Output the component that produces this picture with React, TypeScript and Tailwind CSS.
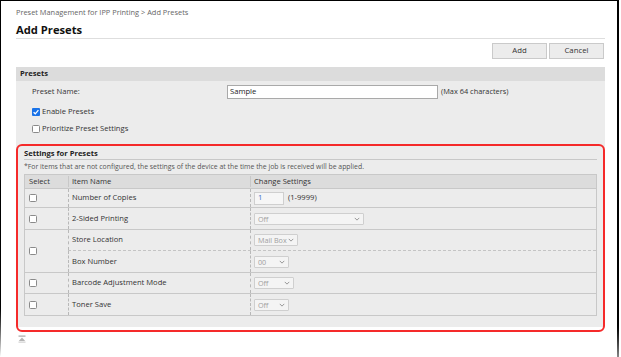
import React from "react";

function Check({ checked = false }: { checked?: boolean }) {
  if (checked) {
    return (
      <span className="flex h-[8px] w-[8px] items-center justify-center rounded-[1px] bg-[#1a73e8]">
        <svg viewBox="0 0 8 8" className="h-[8px] w-[8px]">
          <path d="M1.6 4.2 L3.3 5.8 L6.4 2.2" stroke="#fff" strokeWidth="1.3" fill="none" />
        </svg>
      </span>
    );
  }
  return <span className="block h-[8px] w-[8px] rounded-[1.5px] border border-[#8a8a8a] bg-white" />;
}

function Chevron() {
  return (
    <svg viewBox="0 0 8 5" className="h-[4px] w-[6px] shrink-0">
      <path d="M1 1 L4 4 L7 1" stroke="#8c8c8c" strokeWidth="1.2" fill="none" />
    </svg>
  );
}

function Select({ label, width, tight = false }: { label: string; width: string; tight?: boolean }) {
  return (
    <div
      className={`flex h-[12px] items-center rounded-[1px] border border-[#cfcfcf] bg-[#f4f4f4] pl-[3px] pr-[3px] text-[7.2px] text-[#a0a0a0] ${width} ${
        tight ? "gap-[1px]" : "justify-between"
      }`}
    >
      <span className="whitespace-nowrap leading-[10px]">{label}</span>
      <Chevron />
    </div>
  );
}

type Row = {
  name: string;
  h: string;
  control: React.ReactNode;
};

export default function App() {
  const rows: Row[] = [
    {
      name: "Number of Copies",
      h: "h-[19px]",
      control: (
        <div className="flex items-center gap-[4px]">
          <div className="flex h-[13px] w-[30px] items-center border border-[#cfcfcf] bg-[#f6f6f6] pl-[3px] text-[#3f74c9]">1</div>
          <span>(1-9999)</span>
        </div>
      ),
    },
    { name: "2-Sided Printing", h: "h-[22px]", control: <Select label="Off" width="w-[110px]" /> },
  ];

  return (
    <div className="flex h-[357px] w-[621px] overflow-hidden bg-white font-['Open_Sans',sans-serif] text-[7.6px] text-[#333]">
      <div className="w-px bg-linear-to-b from-black from-85% to-white" />
      <div className="flex-1 border-t border-black pl-[15px] pr-[12px]">
        <div className="pt-[6px] leading-[10px] text-[7.4px] text-[#666]">Preset Management for IPP Printing &gt; Add Presets</div>
        <div className="mt-[6px] border-b border-[#dedede] pb-[1px] text-[11.2px] font-bold leading-[14px] text-[#111]">Add Presets</div>
        <div className="mt-[4px] flex justify-end gap-[2px] pr-px">
          <button className="h-[16px] w-[55px] border border-[#cacaca] bg-[#ececec] text-[7.8px] text-[#333]">Add</button>
          <button className="h-[16px] w-[55px] border border-[#cacaca] bg-[#ececec] text-[7.8px] text-[#333]">Cancel</button>
        </div>

        <div className="mt-[8px] bg-[#ececec]">
          <div className="flex h-[14px] items-center bg-[#dcdcdc] pl-[4px] font-bold text-[#222]">Presets</div>
          <div className="mt-[4px] flex h-[14px] items-center">
            <span className="w-[211px] pl-[16px]">Preset Name:</span>
            <div className="flex h-[14px] w-[211px] items-center border border-[#a9a9a9] bg-white pl-[2px] text-[#222]">Sample</div>
            <span className="ml-[3px] text-[7.4px]">(Max 64 characters)</span>
          </div>
          <div className="mt-[8px] flex h-[10px] items-center gap-[2px] pl-[16px]">
            <Check checked />
            <span>Enable Presets</span>
          </div>
          <div className="mt-[7px] flex h-[10px] items-center gap-[2px] pl-[16px]">
            <Check />
            <span>Prioritize Preset Settings</span>
          </div>

          <div className="relative mt-[10px] px-[8px] pb-[11px] pt-[4px]">
            <div className="pointer-events-none absolute inset-x-0 -bottom-[5px] top-0 rounded-[6px] border-2 border-[#f52a2a]" />
            <div className="border-b border-[#c8c8c8] pb-[1px] font-bold leading-[10px] text-[#222]">Settings for Presets</div>
            <div className="mt-[2px] text-[6.9px] leading-[10px] text-[#555]">
              *For items that are not configured, the settings of the device at the time the job is received will be applied.
            </div>
            <div className="mt-[2px] border border-[#c8c8c8]">
              <div className="flex h-[14px] items-center border-b border-[#c8c8c8] bg-[#dcdcdc]">
                <div className="w-[43px] pl-[4px]">Select</div>
                <div className="w-[182px] border-l border-[#c8c8c8] pl-[3px]">Item Name</div>
                <div className="flex-1 border-l border-[#c8c8c8] pl-[3px]">Change Settings</div>
              </div>
              {rows.map((r) => (
                <div key={r.name} className={`flex items-stretch border-b border-[#c8c8c8] ${r.h}`}>
                  <div className="flex w-[43px] items-center pl-[4px]">
                    <Check />
                  </div>
                  <div className="flex w-[182px] items-center border-l border-dashed border-[#b8b8b8] pl-[3px]">{r.name}</div>
                  <div className="flex flex-1 items-center border-l border-dashed border-[#b8b8b8] pl-[3px]">{r.control}</div>
                </div>
              ))}
              <div className="flex items-stretch border-b border-[#c8c8c8]">
                <div className="flex w-[43px] items-center pl-[4px]">
                  <Check />
                </div>
                <div className="flex-1">
                  <div className="flex h-[21px] border-b border-dashed border-[#c4c4c4]">
                    <div className="flex w-[182px] items-center border-l border-dashed border-[#b8b8b8] pl-[3px]">Store Location</div>
                    <div className="flex flex-1 items-center border-l border-dashed border-[#b8b8b8] pl-[3px]">
                      <Select label="Mail Box" width="w-[44px]" tight />
                    </div>
                  </div>
                  <div className="flex h-[21px]">
                    <div className="flex w-[182px] items-center border-l border-dashed border-[#b8b8b8] pl-[3px]">Box Number</div>
                    <div className="flex flex-1 items-center border-l border-dashed border-[#b8b8b8] pl-[3px]">
                      <Select label="00" width="w-[35px]" />
                    </div>
                  </div>
                </div>
              </div>
              <div className="flex h-[21px] items-stretch border-b border-[#c8c8c8]">
                <div className="flex w-[43px] items-center pl-[4px]">
                  <Check />
                </div>
                <div className="flex w-[182px] items-center border-l border-dashed border-[#b8b8b8] pl-[3px]">Barcode Adjustment Mode</div>
                <div className="flex flex-1 items-center border-l border-dashed border-[#b8b8b8] pl-[3px]">
                  <Select label="Off" width="w-[40px]" />
                </div>
              </div>
              <div className="flex h-[21px] items-stretch">
                <div className="flex w-[43px] items-center pl-[4px]">
                  <Check />
                </div>
                <div className="flex w-[182px] items-center border-l border-dashed border-[#b8b8b8] pl-[3px]">Toner Save</div>
                <div className="flex flex-1 items-center border-l border-dashed border-[#b8b8b8] pl-[3px]">
                  <Select label="Off" width="w-[35px]" />
                </div>
              </div>
            </div>
          </div>
        </div>

        <div className="mt-[8px] pl-[2px]">
          <svg viewBox="0 0 8 8" className="h-[8px] w-[8px]">
            <rect x="0.5" y="0.5" width="7" height="1.2" fill="#a8a8a8" />
            <path d="M4 2.4 L7.2 6 L0.8 6 Z" fill="#b4b4b4" />
            <rect x="0.5" y="6.6" width="7" height="1" fill="#c8c8c8" />
          </svg>
        </div>
      </div>
      <div className="w-[2px] bg-linear-to-b from-black from-90% to-[#888]" />
      <div className="w-[2px]" />
    </div>
  );
}
